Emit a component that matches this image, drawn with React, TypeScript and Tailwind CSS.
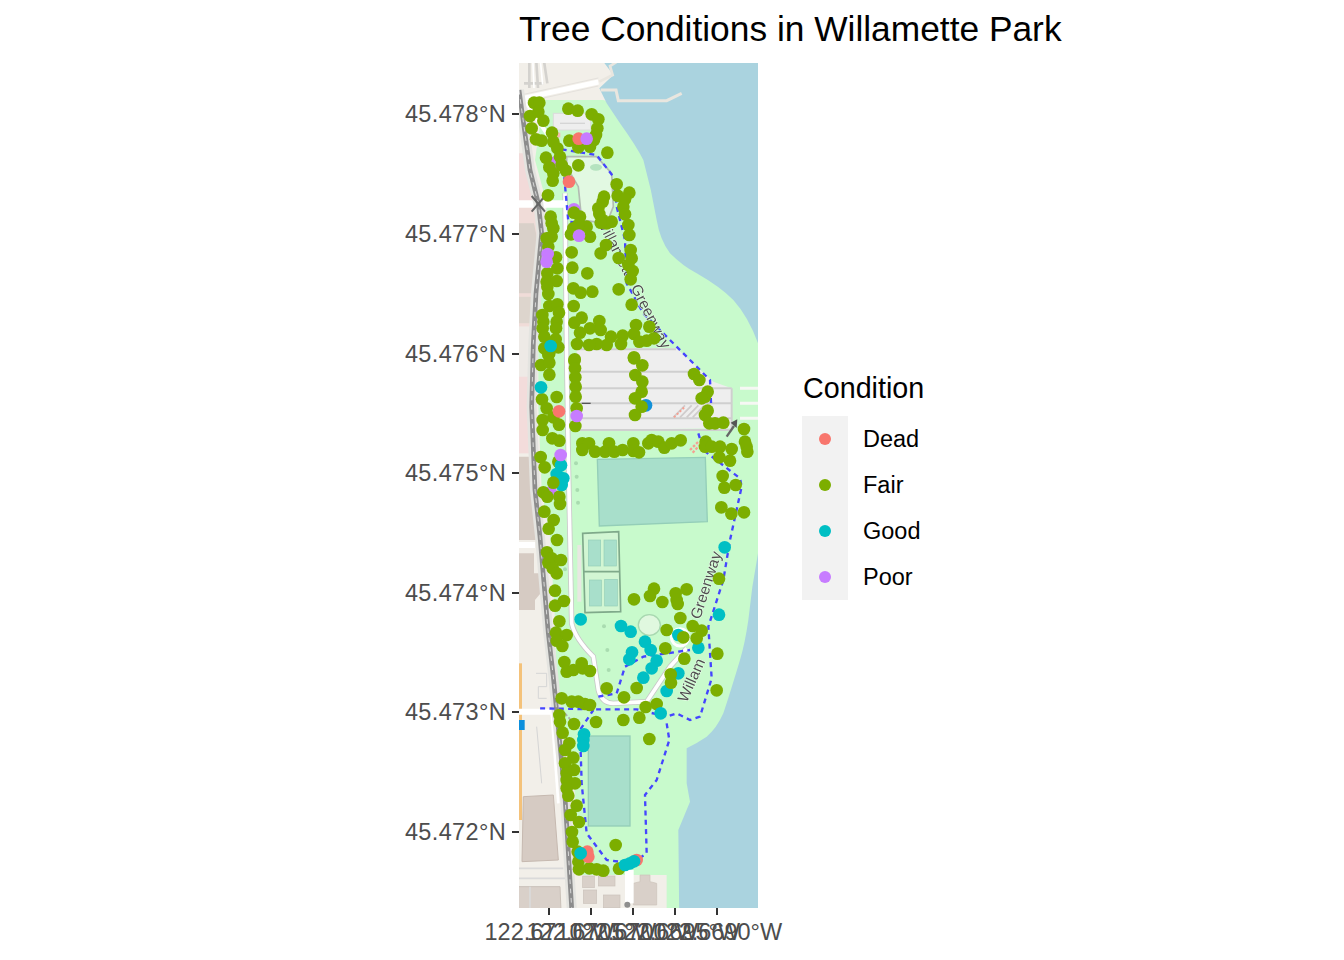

const FONT = "font-['Liberation_Sans',Arial,sans-serif]";

type P = [number, number];

// Dots are listed in 3x map units; the offsets add the y of each traced strip.
const shift = (list: P[], dy: number): P[] => list.map(([x, y]) => [x, y + dy] as P);

const fairA: P[] = [
  [72,128],[88,128],[60,168],[85,155],[100,182],[65,205],[78,238],[95,242],[126,218],[130,245],[142,265],[150,290],[155,315],[168,332],[108,293],[118,322],[130,340],[128,362],[114,406],
  [175,146],[203,152],[245,163],[265,178],[262,205],[258,225],[252,240],[240,260],[205,262],[178,242],[292,278],[205,316],
  [320,373],[358,398],[323,407],[345,418],[340,440],[345,463],[355,495],[358,525],[362,570],[365,595],[355,615],[368,633],[362,658],[326,594],[326,688],[365,734],[378,795],[418,800],[372,822],[388,845],[410,842],[432,835],
  [282,410],[278,425],[265,445],[268,462],[278,480],[305,485],[290,490],[272,488],
  [192,458],[210,470],[230,500],[205,495],[190,505],[183,523],[240,530],[288,555],[272,580],[185,577],[187,623],[232,640],[190,685],[212,698],[247,695],[191,738],[215,773],[193,788],[268,783],[240,805],[272,810],[210,818],[303,830],[338,827],[333,852],[290,855],[260,852],[237,855],[201,852],
  [122,470],[125,490],[130,505],[125,530],[110,535],[115,560],[138,592],[142,625],[112,640],[110,665],[140,663],[112,680],[115,702],[118,738],[142,733],[147,758],[97,765],[140,785],[100,785],[138,805],[98,805],[103,830],[137,838],[145,862],[103,865],[118,880],[194,898],[372,892],
];
const fairB: P[] = shift([
  [115,45],[93,75],[118,68],[118,104],[193,62],[195,85],[196,112],[197,140],[197,170],[200,205],[196,258],
  [372,55],[397,76],[376,105],[397,125],[395,155],[375,175],
  [552,102],[568,120],[593,155],[585,170],[575,175],[593,212],[585,225],[598,250],[615,250],[640,248],
  [140,171],[96,178],[110,205],[130,232],[98,240],[147,254],[98,270],[127,295],[148,302],
  [217,310],[237,310],[217,330],[255,335],[285,335],[297,310],[313,335],[338,330],[370,310],[370,333],[387,337],[415,310],[425,300],[445,305],[463,323],[485,310],[512,301],
  [587,305],[585,320],[605,320],[630,320],[665,327],[628,352],[660,362],[702,267],[705,305],[710,320],[712,335],
  [638,408],[643,443],[677,435],[634,502],[664,521],[702,517],
  [92,351],[104,382],[145,365],[100,457],[112,470],[148,470],[150,492],[103,515],[131,540],[116,566],[141,600],[111,637],[125,655],[153,660],[115,668],[128,685],[140,700],[135,752],[162,783],[135,797],[148,844],[138,878],[170,885],
  [432,746],[420,768],[372,778],[457,786],[497,760],[530,748],[500,780],[503,792],[511,834],[470,870],[548,858],[575,872],[627,716],
], 840);
const fairC: P[] = shift([
  [140,62],[157,78],[466,85],[622,101],[523,116],[163,126],[215,130],[170,155],[190,150],[218,145],[240,153],[620,211],[290,205],[342,232],[380,204],[155,235],[185,245],[205,245],[225,252],[240,255],[407,261],[440,252],[148,285],[150,305],[192,312],[258,306],[340,300],[388,293],[158,338],[178,370],[418,357],[165,390],[190,413],[165,430],[192,450],[170,460],[170,480],[195,490],[170,505],[175,527],[200,557],[182,585],[207,606],[186,636],[188,665],[317,675],[203,695],[205,725],[207,748],[238,745],[260,748],[280,752],[327,746],
], 1680);
const fairTop: P[] = [
  ...shift([[130,428],[395,200],[375,225]], 840),
  ...shift([[482,163],[483,188],[520,52],[560,55]], 1680),
];
const teal: P[] = [
  [122,858],
  ...shift([[93,142],[153,376],[140,402],[160,415],[155,435],[644,622],[627,824],[212,838],[333,858],[362,875]], 840),
  ...shift([[405,65],[422,90],[366,97],[358,118],[440,122],[425,145],[400,173],[505,160],[470,213],[565,83],[505,45],[452,280],[222,343],[220,360],[220,378],[212,700],[345,735],[360,730],[372,724]], 1680),
];
const red: P[] = [[206,236],[177,365],[147,1054],[232,2375],[235,2390],[380,2400]];
const purpleUnder: P[] = [[192,448],[140,305],[122,1297]];
const purpleOver: P[] = [[113,582],[110,605],[230,236],[207,527],[200,1068],[152,1185]];

function Dots({ points, fill }: { points: P[]; fill: string }) {
  return (
    <g fill={fill}>
      {points.map(([x, y], i) => (
        <circle key={i} cx={x} cy={y} r={19} />
      ))}
    </g>
  );
}

const RAIL = "M27 90 L60 330 L85 430 L95 520 L78 700 L70 850 L65 1040 L75 1290 L90 1430 L115 1720 L130 1850 L165 2210 L185 2544";
const WALK = "M165 400 L170 900 L175 1200 L185 1690 Q195 1735 250 1790 L265 1890 Q275 1930 310 1930 L410 1925 L480 1820 L530 1765";

function MapPanel() {
  return (
    <svg width={239} height={845} viewBox="27 9 717 2535" className="block shrink-0">
      <defs>
        <filter id="soft" x="0" y="0" width="100%" height="100%" filterUnits="objectBoundingBox">
          <feGaussianBlur stdDeviation="1.7" />
        </filter>
      </defs>
      <g filter="url(#soft)">
        <rect x="-20" y="-40" width="820" height="2640" fill="#f2efe9" />
        {/* left side land use */}
        <polygon points="0,280 65,280 85,430 0,430" fill="#f2dad9" />
        <polygon points="0,440 100,440 92,800 0,800" fill="#f0dcd8" />
        <polygon points="0,490 72,490 80,530 80,700 0,700" fill="#d9d0c9" />
        <polygon points="0,710 80,710 78,790 0,790" fill="#ddd5cd" />
        <rect x="0" y="800" width="77" height="150" fill="#eeeae6" />
        <rect x="0" y="950" width="61" height="230" fill="#f3dcdb" />
        <polygon points="0,1190 62,1190 62,1240 80,1240 88,1440 0,1440" fill="#d6cbc3" />
        <polygon points="0,1480 72,1480 72,1540 95,1540 100,1590 75,1620 75,1650 0,1650" fill="#d6cbc3" />
        <rect x="0" y="1810" width="36" height="470" fill="#f4c27a" />
        <polygon points="40,2210 130,2205 145,2400 36,2405" fill="#d6cbc3" stroke="#c6b9b0" strokeWidth="3" />
        <polygon points="0,2480 150,2480 155,2600 0,2600" fill="#d9d0c9" stroke="#c9c0b8" strokeWidth="3" />
        <path d="M0 2425 H160 M0 2455 H165 M60 2480 V2600" stroke="#dadada" strokeWidth="5" fill="none" />
        <path d="M78 1840 H110 V1880 H85 V1915 H110 M80 2000 L95 2170" stroke="#d5d5d5" strokeWidth="3" fill="none" />
        {/* park */}
        <polygon
          points="100,120 280,120 790,300 790,2600 470,2600 470,2445 200,2445 195,2200 140,1900 135,1680 120,1430 95,1290 85,1040 85,850 105,520 110,430 75,300"
          fill="#c8facc"
        />
        {/* water */}
        <path
          d="M275 -20 L283 9 L310 45 L268 85 L290 130 L330 190 Q380 260 400 300 Q425 390 440 480 Q450 540 480 580 Q520 620 560 640 Q630 680 670 720 Q715 770 744 850 L790 960 V-20 Z"
          fill="#aad3df"
        />
        <path
          d="M790 1340 L744 1480 Q725 1580 715 1680 Q705 1750 690 1800 Q660 1900 640 1960 Q620 2005 590 2030 Q560 2050 530 2065 V2170 L540 2225 L505 2310 L508 2600 H790 Z"
          fill="#aad3df"
        />
        <path d="M272 90 H318 L325 122 H470 L515 100" stroke="#e9e6df" strokeWidth="9" fill="none" />
        <path d="M268 65 L308 45 L300 18 L345 -10" stroke="#e9e6df" strokeWidth="8" fill="none" />
        {/* top streets */}
        <path d="M0 124 L265 66" stroke="#ffffff" strokeWidth="15" fill="none" />
        <path d="M0 112 L265 54 M0 136 L265 78" stroke="#dcd9d4" strokeWidth="2" fill="none" />
        <path d="M58 -10 V84 M78 -10 L84 84 M100 -10 L112 70 M42 70 H100" stroke="#d4d2ce" strokeWidth="8" fill="none" />
        <path d="M68 -10 L72 84 M90 -10 L98 74" stroke="#ffffff" strokeWidth="5" fill="none" />
        <path d="M30 100 L110 220 L150 268" stroke="#ffffff" strokeWidth="12" fill="none" />
        {/* paved lots */}
        <rect x="130" y="160" width="112" height="50" fill="#eeeeee" stroke="#dcdcdc" strokeWidth="3" />
        <path d="M150 190 H225" stroke="#d5d5d5" strokeWidth="4" />
        <rect x="141" y="218" width="10" height="14" fill="#f7b9ad" />
        <polygon points="200,865 500,865 610,965 665,985 665,1105 205,1110" fill="#eeeeee" />
        <path d="M200 868 H498 M205 935 H560 M205 985 H665 M205 1030 H665 M205 1075 H665 M205 1110 H665 M665 985 V1110" stroke="#cfcfcf" strokeWidth="6" fill="none" />
        <path d="M690 985 H790 M690 1030 H790 M690 1075 H790" stroke="#f6f8f4" strokeWidth="9" fill="none" />
        <path d="M490 1072 L525 1036 M510 1072 L545 1036 M530 1072 L565 1036 M548 1072 L583 1036" stroke="#d0cccc" strokeWidth="5" />
        <path d="M492 1072 L525 1040 M570 1070 L580 1060" stroke="#f5a092" strokeWidth="6" strokeDasharray="6 6" />
        <path d="M540 1170 L565 1145 M548 1178 L572 1152" stroke="#f5a092" strokeWidth="7" strokeDasharray="8 5" />
        <path d="M215 1030 H242" stroke="#555555" strokeWidth="4" />
        {/* lawn */}
        <path d="M170 290 H260 L305 340 L310 440 L290 490 L215 480 L205 380 L170 320 Z" fill="#e2f9e2" stroke="#b2bcb2" strokeWidth="5" />
        <ellipse cx="258" cy="322" rx="18" ry="10" fill="#b5e3bf" />
        {/* sports */}
        <polygon points="262,1198 586,1192 592,1385 268,1398" fill="#a8dfcb" stroke="#94ceb8" strokeWidth="4" />
        <polygon points="218,1420 326,1415 332,1655 225,1658" fill="#d2f6d3" stroke="#7fa98a" strokeWidth="5" />
        <path d="M220 1535 H328" stroke="#7fa98a" strokeWidth="5" />
        <rect x="235" y="1440" width="37" height="78" fill="#a8dfcb" stroke="#94ceb8" strokeWidth="2" />
        <rect x="282" y="1440" width="37" height="78" fill="#a8dfcb" stroke="#94ceb8" strokeWidth="2" />
        <rect x="238" y="1560" width="36" height="78" fill="#a8dfcb" stroke="#94ceb8" strokeWidth="2" />
        <rect x="284" y="1558" width="38" height="80" fill="#a8dfcb" stroke="#94ceb8" strokeWidth="2" />
        <rect x="235" y="2028" width="125" height="270" fill="#a8dfcb" stroke="#94ceb8" strokeWidth="4" />
        <ellipse cx="418" cy="1695" rx="33" ry="31" fill="#e0f8df" stroke="#a8d8b0" strokeWidth="4" />
        <g fill="#a9dcb0">
          <circle cx="198" cy="1210" r="6" /><circle cx="200" cy="1250" r="6" /><circle cx="202" cy="1290" r="6" /><circle cx="204" cy="1328" r="6" />
          <circle cx="165" cy="1528" r="6" /><circle cx="282" cy="1699" r="6" /><circle cx="292" cy="1770" r="6" /><circle cx="296" cy="1830" r="6" />
        </g>
        <rect x="202" y="1455" width="12" height="170" fill="#e8e8e2" />
        {/* main paths */}
        <path d={WALK} stroke="#c8c8c8" strokeWidth="16" fill="none" />
        <path d={WALK} stroke="#ffffff" strokeWidth="11" fill="none" />
        <circle cx="510" cy="1732" r="26" fill="none" stroke="#ffffff" strokeWidth="9" />
        <path d="M0 432 H165" stroke="#ffffff" strokeWidth="22" />
        <path d="M0 1455 H75" stroke="#ffffff" strokeWidth="18" />
        <path d="M0 1955 H130" stroke="#ffffff" strokeWidth="18" />
        <rect x="0" y="1980" width="44" height="30" fill="#0a8fdc" />
        <path d="M125 1960 L145 2230" stroke="#ffffff" strokeWidth="8" />
        <path d="M165 1960 L200 2000" stroke="#aaaaaa" strokeWidth="5" strokeDasharray="10 6" />
        {/* bottom block */}
        <g fill="#d9d0c9" stroke="#cbc2ba" strokeWidth="2">
          <rect x="218" y="2448" width="35" height="35" />
          <rect x="265" y="2448" width="50" height="30" />
          <rect x="220" y="2490" width="40" height="40" />
          <rect x="280" y="2505" width="50" height="38" />
          <polygon points="390,2445 420,2445 420,2465 440,2470 440,2535 370,2535 370,2470 390,2465" />
        </g>
        <rect x="345" y="2430" width="26" height="100" fill="#ffffff" />
        <circle cx="352" cy="2534" r="9" fill="#8e8e8e" />
        {/* rail */}
        <path d={RAIL} stroke="#e4e4e0" strokeWidth="30" fill="none" />
        <path d={RAIL} stroke="#8c8c8c" strokeWidth="14" fill="none" />
        <path d={RAIL} stroke="#d8d8d8" strokeWidth="3" strokeDasharray="14 14" fill="none" />
        <path d="M65 408 L105 455 M105 408 L65 455" stroke="#666666" strokeWidth="6" />
        {/* blue track */}
        <g stroke="#4444ff" strokeWidth="7" strokeDasharray="15 13" fill="none">
          <path d="M155 268 L260 285 L310 350 L320 440 L345 540 L350 670 L400 760 L530 890 L600 960 L605 1070" />
          <path d="M565 1120 L580 1170 L690 1255 L695 1280 L660 1440 L640 1560 L595 1700 L605 1855 L570 1970 L540 1980 L500 1960 L470 1970 L380 1948 L250 1948 L90 1945" />
          <path d="M470 1990 L478 2040 L440 2160 L405 2205 L410 2380 L365 2410 L290 2400 L230 2320 L215 2170 L210 2010 L250 1950" />
          <path d="M265 1910 L320 1900 L345 1820 L400 1790 L540 1770" />
          <path d="M155 268 L175 485 L225 490" />
        </g>
        {/* labels on the map */}
        <g fill="#505050" stroke="#e8ffe8" strokeWidth="3" paintOrder="stroke" fontFamily="'Liberation Sans',Arial,sans-serif" fontSize="46">
          <text transform="translate(258 480) rotate(63)">Willamette Greenway</text>
          <text transform="translate(570 1680) rotate(-72)">Greenway</text>
          <text transform="translate(530 1930) rotate(-66)">Willam</text>
        </g>
        <path d="M650 1130 L672 1098" stroke="#666666" strokeWidth="7" />
        <polygon points="662,1088 682,1078 680,1104" fill="#555555" />
      </g>
      {/* observations */}
      <Dots points={purpleUnder} fill="#C77CFF" />
      <Dots points={[[408, 1036]]} fill="#1290d8" />
      <Dots points={[...fairA, ...fairB, ...fairC]} fill="#7CAE00" />
      <Dots points={red} fill="#F8766D" />
      <Dots points={teal} fill="#00BFC4" />
      <Dots points={fairTop} fill="#7CAE00" />
      <Dots points={purpleOver} fill="#C77CFF" />
    </svg>
  );
}

const latLabels = ["45.478°N", "45.477°N", "45.476°N", "45.475°N", "45.474°N", "45.473°N", "45.472°N"];
const lonLabels = ["122.6710°W", "122.6705°W", "122.6700°W", "122.6695°W", "122.6690°W"];
const legend = [
  { name: "Dead", dot: "bg-[#F8766D]" },
  { name: "Fair", dot: "bg-[#7CAE00]" },
  { name: "Good", dot: "bg-[#00BFC4]" },
  { name: "Poor", dot: "bg-[#C77CFF]" },
];

export default function App() {
  return (
    <div className={`w-[1344px] h-[960px] bg-white overflow-hidden ${FONT}`}>
      <div className="h-[63px] pl-[519px] pt-[9px] text-[35.35px] leading-[40px] text-black whitespace-nowrap">
        Tree Conditions in Willamette Park
      </div>
      <div className="flex h-[845px]">
        <div className="w-[519px] shrink-0 flex flex-col items-end gap-[95.6px] pt-[39.4px]">
          {latLabels.map((label) => (
            <div key={label} className="h-6 flex items-center text-[23.5px] leading-6 tracking-[0.35px] text-[#4D4D4D]">
              <span>{label}</span>
              <span className="ml-[6px] w-[7px] h-[2px] bg-[#333333]" />
            </div>
          ))}
        </div>
        <MapPanel />
        <div className="ml-[44px] pt-[308px]">
          <div className="h-[45px] pl-px text-[28.7px] leading-[34px] text-black">Condition</div>
          {legend.map((row) => (
            <div key={row.name} className="flex items-center h-[46px]">
              <div className="w-[46px] h-full bg-[#F2F2F2] flex items-center justify-center">
                <span className={`block w-3 h-3 rounded-full ${row.dot}`} />
              </div>
              <span className="ml-[15px] text-[23.5px] leading-6 text-black">{row.name}</span>
            </div>
          ))}
        </div>
      </div>
      <div className="flex pl-[528.3px]">
        {lonLabels.map((label) => (
          <div key={label} className="w-[42px] flex flex-col items-center">
            <span className="block w-[2px] h-[6.5px] bg-[#333333]" />
            <span className="mt-[5px] whitespace-nowrap text-[23.5px] leading-6 text-[#4D4D4D]">{label}</span>
          </div>
        ))}
      </div>
    </div>
  );
}
